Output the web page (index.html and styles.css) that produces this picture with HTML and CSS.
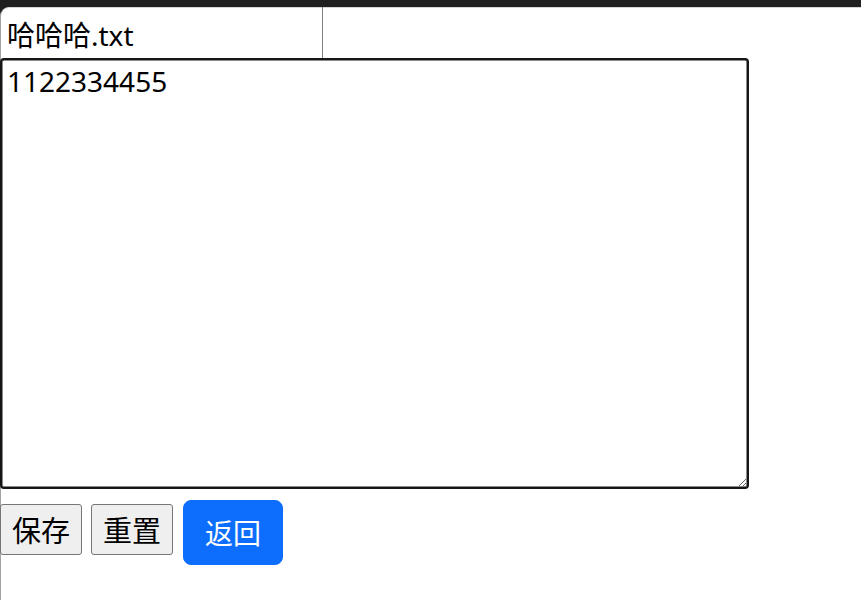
FILE: index.html
```html
<!DOCTYPE html>
<html lang="zh">
<head>
<meta charset="utf-8">
<title>编辑</title>
<link rel="stylesheet" href="styles.css">
</head>
<body>
<div class="page">
  <input class="filename" type="text" value="哈哈哈.txt">
  <textarea class="editor">1122334455</textarea>
  <div class="actions">
    <button class="btn">保存</button>
    <button class="btn">重置</button>
    <button class="btn-primary">返回</button>
  </div>
</div>
</body>
</html>
```
FILE: styles.css
```css
html, body {
  margin: 0;
  padding: 0;
  height: 100%;
  background: #202020;
  overflow: hidden;
}
.page {
  margin-top: 7px;
  height: calc(100% - 7px);
  background: #ffffff;
  border-top-left-radius: 9px;
  border-left: 1px solid #a3a3a3;
  border-top: 1px solid #d6d6d6;
  box-sizing: border-box;
  font-family: "Noto Sans", "Noto Sans CJK SC", sans-serif;
}
.filename {
  display: block;
  box-sizing: border-box;
  width: 322px;
  height: 51px;
  margin: -1px 0 0 0;
  padding: 3px 0 0 6px;
  border: none;
  border-right: 1px solid #808080;
  background: transparent;
  font-family: "Noto Sans", "Noto Sans CJK SC", sans-serif;
  font-size: 28px;
  color: #000;
  outline: none;
}
.editor {
  display: block;
  box-sizing: border-box;
  width: 749px;
  height: 431px;
  margin: 0 0 0 -1px;
  padding: 4px 5px;
  border: 2px solid #161616;
  border-radius: 4px;
  box-shadow: inset 0 0 0 0.5px #161616;
  font-family: "Noto Sans", "Noto Sans CJK SC", sans-serif;
  font-size: 28px;
  line-height: 1.25;
  color: #000;
  outline: none;
  resize: both;
}
.actions {
  display: flex;
  align-items: flex-start;
  gap: 9px;
  margin: 11px 0 0 -1px;
}
.btn {
  box-sizing: border-box;
  height: 51px;
  padding: 0 11px 2px;
  margin-top: 4px;
  background: #efefef;
  border: 1px solid #767676;
  border-radius: 3px;
  font-family: "Noto Sans CJK SC", sans-serif;
  font-size: 29px;
  color: #000;
}
.btn-primary {
  box-sizing: border-box;
  height: 65px;
  padding: 0 21px 2px;
  margin-left: 1px;
  background: #0d6efd;
  border: 1px solid #0d6efd;
  border-radius: 8px;
  font-family: "Noto Sans CJK SC", sans-serif;
  font-size: 28px;
  color: #ffffff;
}
```
